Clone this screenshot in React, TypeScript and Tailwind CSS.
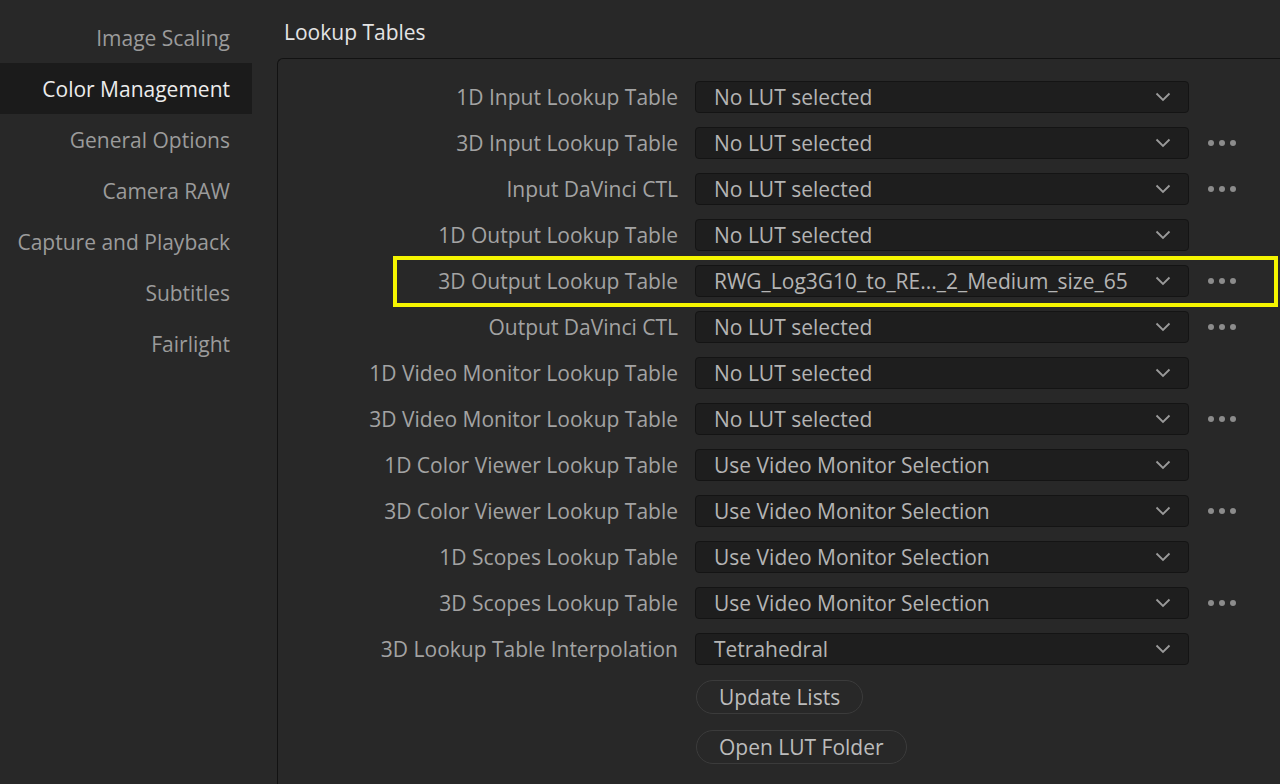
import React from "react";

const navItems = [
  "Image Scaling",
  "Color Management",
  "General Options",
  "Camera RAW",
  "Capture and Playback",
  "Subtitles",
  "Fairlight",
];

type LutRow = {
  label: string;
  value: string;
  more?: boolean;
  highlight?: boolean;
};

const rows: LutRow[] = [
  { label: "1D Input Lookup Table", value: "No LUT selected" },
  { label: "3D Input Lookup Table", value: "No LUT selected", more: true },
  { label: "Input DaVinci CTL", value: "No LUT selected", more: true },
  { label: "1D Output Lookup Table", value: "No LUT selected" },
  {
    label: "3D Output Lookup Table",
    value: "RWG_Log3G10_to_RE..._2_Medium_size_65",
    more: true,
    highlight: true,
  },
  { label: "Output DaVinci CTL", value: "No LUT selected", more: true },
  { label: "1D Video Monitor Lookup Table", value: "No LUT selected" },
  { label: "3D Video Monitor Lookup Table", value: "No LUT selected", more: true },
  { label: "1D Color Viewer Lookup Table", value: "Use Video Monitor Selection" },
  { label: "3D Color Viewer Lookup Table", value: "Use Video Monitor Selection", more: true },
  { label: "1D Scopes Lookup Table", value: "Use Video Monitor Selection" },
  { label: "3D Scopes Lookup Table", value: "Use Video Monitor Selection", more: true },
  { label: "3D Lookup Table Interpolation", value: "Tetrahedral" },
];

function Chevron() {
  return (
    <svg width="16" height="10" viewBox="0 0 16 10" fill="none">
      <path d="M1.5 1.5 L8 8 L14.5 1.5" stroke="#9a9a9a" strokeWidth="1.8" />
    </svg>
  );
}

function MoreDots() {
  return (
    <div className="flex items-center gap-[5px]">
      <span className="w-[6px] h-[6px] rounded-full bg-[#8c8c8c]" />
      <span className="w-[6px] h-[6px] rounded-full bg-[#8c8c8c]" />
      <span className="w-[6px] h-[6px] rounded-full bg-[#8c8c8c]" />
    </div>
  );
}

function Row({ row }: { row: LutRow }) {
  return (
    <div className="relative flex items-center h-[46px]">
      <div className="w-[400px] shrink-0 text-right text-[#a3a3a3] whitespace-nowrap">{row.label}</div>
      <div className="ml-[17px] w-[494px] h-[32px] shrink-0 flex items-center justify-between pl-[18px] pr-[17px] bg-[#1e1e1e] border border-[#141414] rounded-[4px] text-[#b4b4b4]">
        <span className="whitespace-nowrap">{row.value}</span>
        <Chevron />
      </div>
      <div className="w-[66px] flex justify-center">{row.more && <MoreDots />}</div>
      {row.highlight && (
        <span className="absolute left-[115px] right-[2px] top-[-2px] bottom-[-3px] border-4 border-[#f5f500] pointer-events-none" />
      )}
    </div>
  );
}

export default function App() {
  return (
    <div
      className="w-[1280px] h-[784px] overflow-hidden bg-[#282828] flex text-[21px] leading-[26px]"
      style={{ fontFamily: '"Open Sans", "Noto Sans", sans-serif' }}
    >
      <nav className="w-[252px] shrink-0 pt-[12px]">
        {navItems.map((item) => (
          <div
            key={item}
            className={
              item === "Color Management"
                ? "h-[51px] flex items-center justify-end pr-[22px] bg-[#1b1b1b] text-[#ececec]"
                : "h-[51px] flex items-center justify-end pr-[22px] text-[#9b9b9b]"
            }
          >
            {item}
          </div>
        ))}
      </nav>

      <main className="flex-1 flex flex-col pl-[25px]">
        <h2 className="pl-[7px] pt-[19px] pb-[13px] text-[#e4e4e4]">Lookup Tables</h2>
        <section className="flex-1 border-l border-t border-[#121212] rounded-tl-[6px] pt-[15px]">
          {rows.map((row) => (
            <Row key={row.label} row={row} />
          ))}
          <div className="ml-[418px] mt-[8px] flex flex-col items-start gap-[16px]">
            <button className="h-[34px] px-[22px] rounded-full border border-[#3b3b3b] text-[#bcbcbc]">
              Update Lists
            </button>
            <button className="h-[34px] px-[22px] rounded-full border border-[#3b3b3b] text-[#bcbcbc]">
              Open LUT Folder
            </button>
          </div>
        </section>
      </main>
    </div>
  );
}
